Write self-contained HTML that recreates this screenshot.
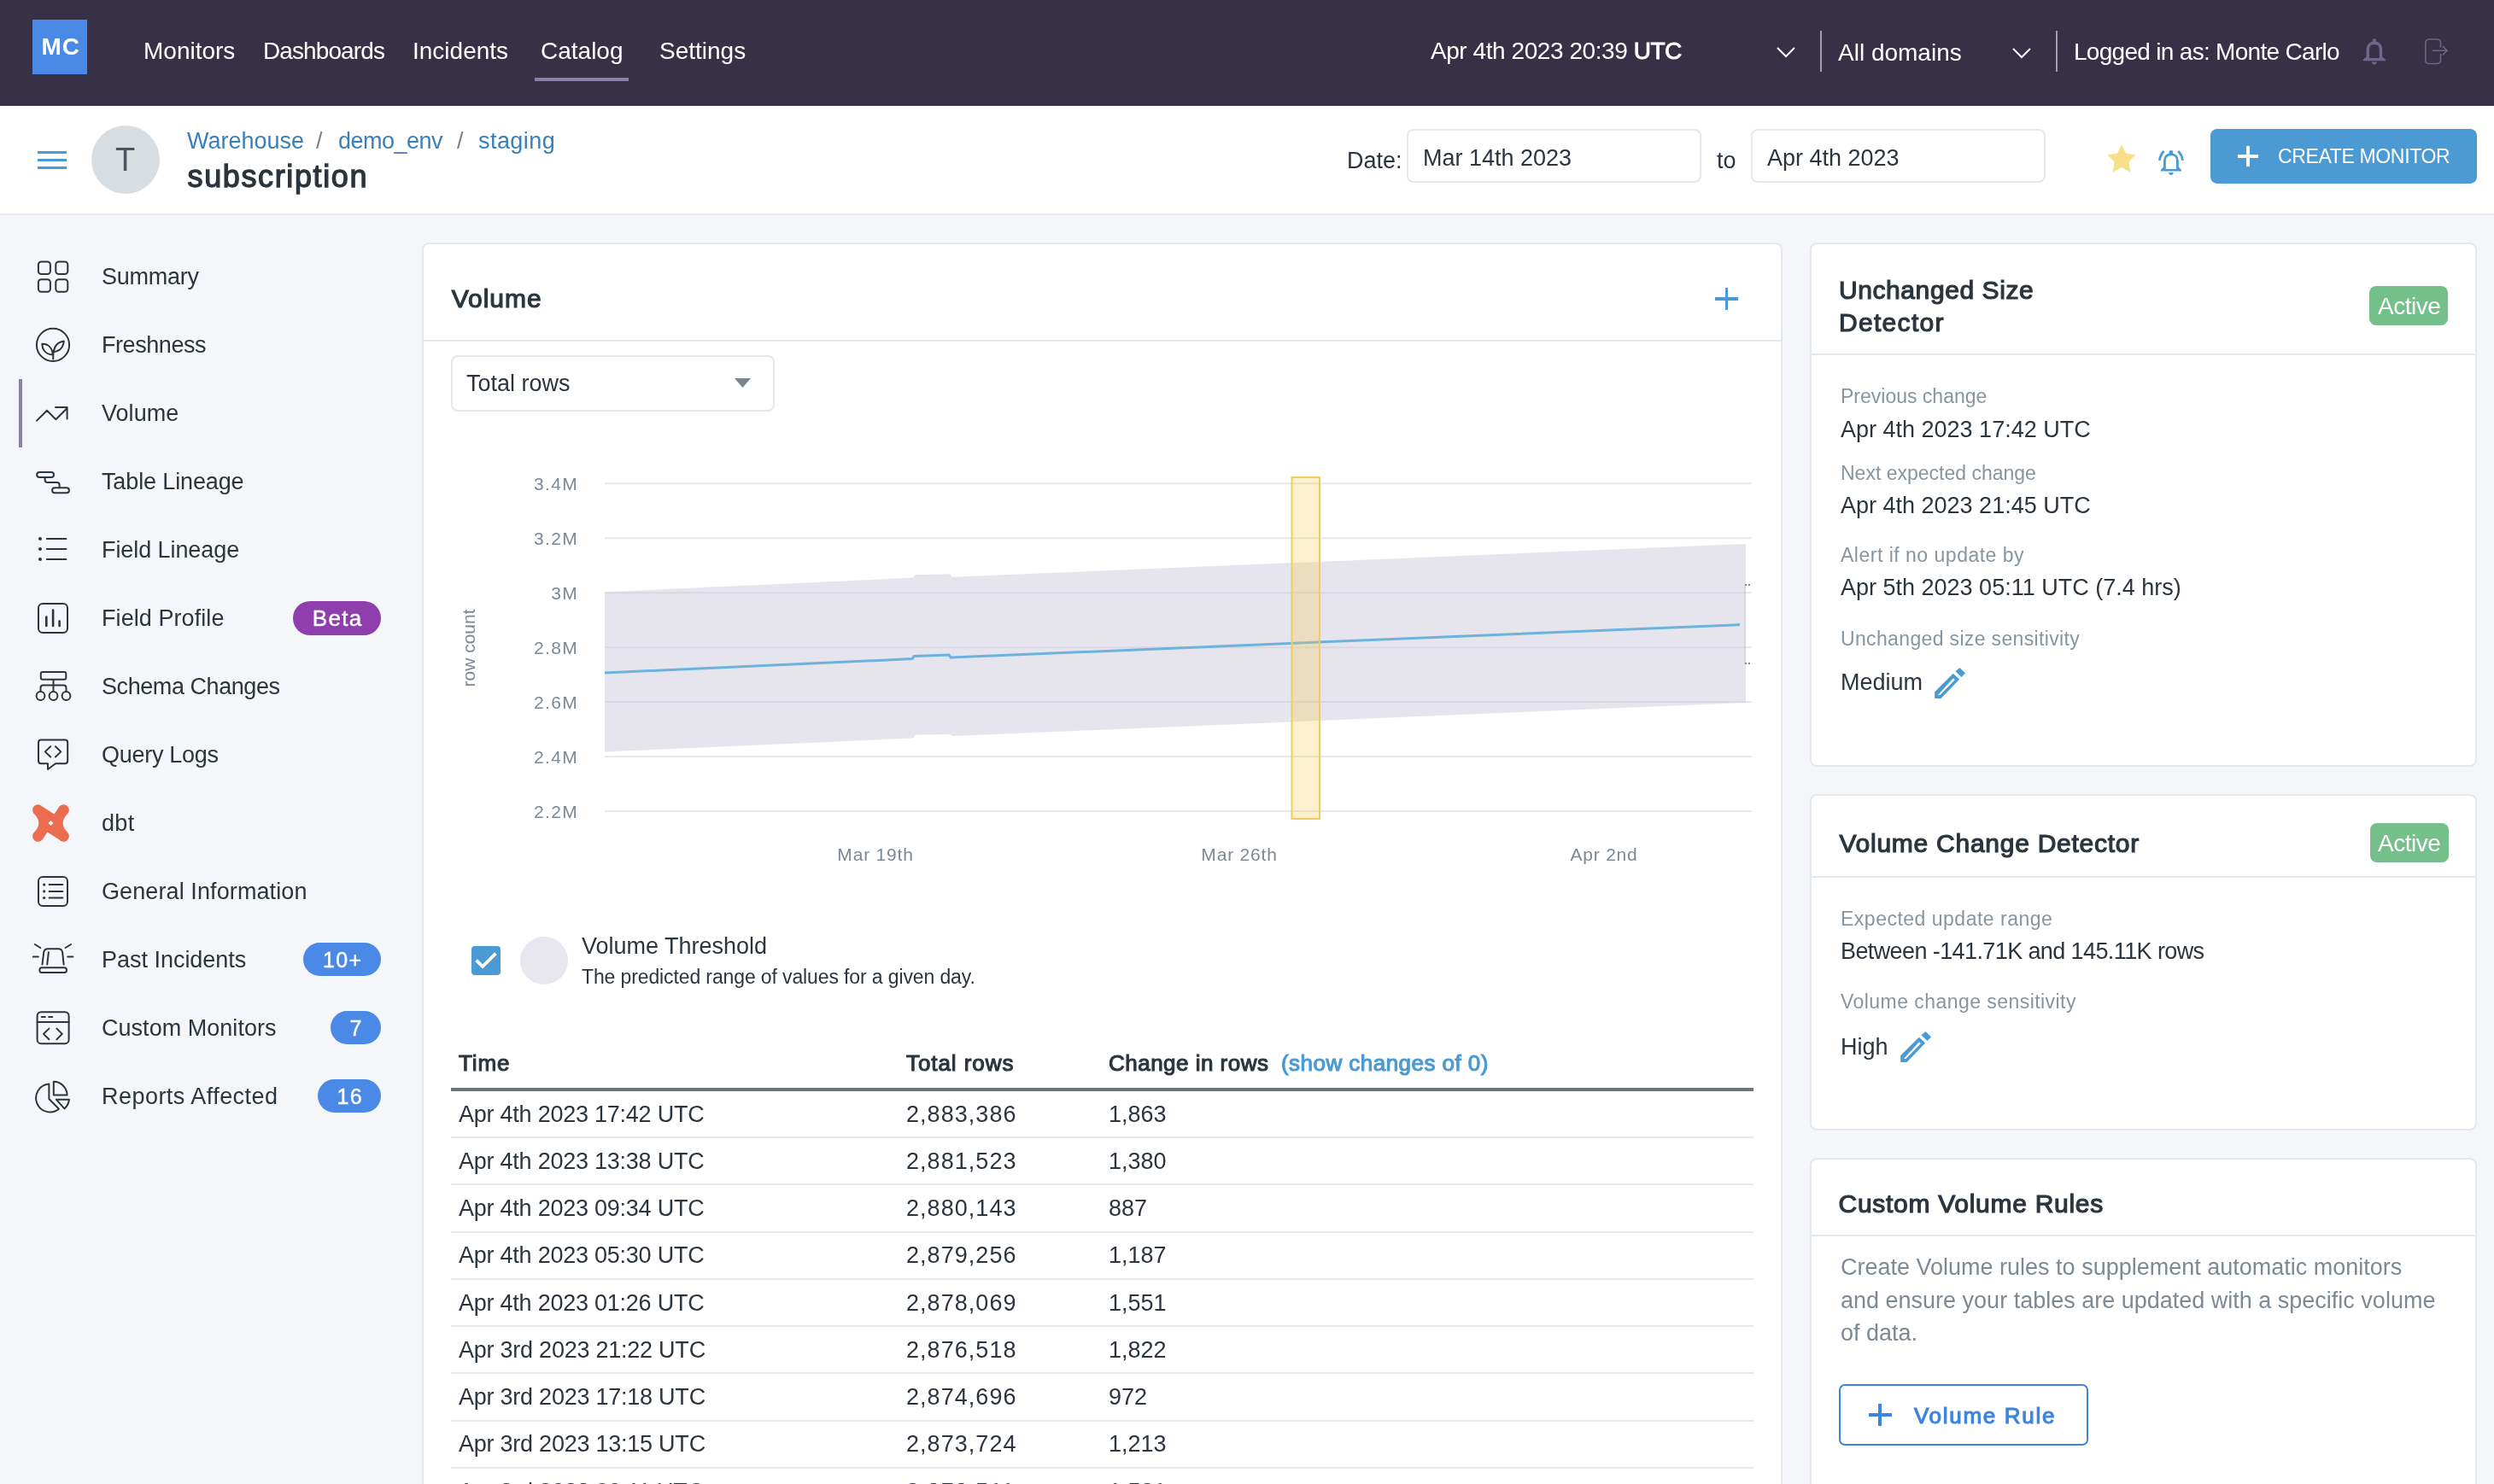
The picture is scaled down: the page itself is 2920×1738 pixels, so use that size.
<!DOCTYPE html>
<html><head><meta charset="utf-8">
<style>
*{margin:0;padding:0;box-sizing:border-box}
html,body{width:2920px;height:1738px;overflow:hidden;background:#f4f6fa;font-family:"Liberation Sans",sans-serif;color:#2c353e}
.a{position:absolute}
.t{position:absolute;white-space:nowrap;line-height:1}
svg{position:absolute;overflow:visible}
#nav{position:absolute;left:0;top:0;width:2920px;height:124px;background:#373046}
#hdr{position:absolute;left:0;top:124px;width:2920px;height:128px;background:#fff;border-bottom:2px solid #e5e9ec}
.card{position:absolute;background:#fff;border:2px solid #e4e8eb;border-radius:8px}
.nl{color:#fff;font-size:28px}
.sb{font-size:27px;color:#2c353e}
.badge{position:absolute;border-radius:20px;color:#fff;font-size:25px;text-align:center;line-height:40px;height:39px;background:#4a89e6;letter-spacing:1.3px;padding-left:1.3px;-webkit-text-stroke:0.4px #fff}
.lbl{font-size:23px;color:#8795a0}
.val{font-size:27px;color:#2c353e}
.sep{position:absolute;left:528px;width:1525px;height:2px;background:#e6eaee}
.td{font-size:27px;color:#2c353e}
#wrap{position:absolute;left:0;top:0;width:2920px;height:1738px;overflow:hidden;will-change:transform}
</style></head><body><div id="wrap">
<!-- NAV -->
<div id="nav">
  <div class="a" style="left:38px;top:23px;width:64px;height:64px;background:#4a89e6"></div>
  <div class="t" style="left:48.5px;top:40.5px;font-size:28px;font-weight:bold;color:#fff;letter-spacing:1px">MC</div>
  <div class="t nl" style="left:168px;top:46px">Monitors</div>
  <div class="t nl" style="left:308px;top:46px;letter-spacing:-0.9px">Dashboards</div>
  <div class="t nl" style="left:483px;top:46px">Incidents</div>
  <div class="t nl" style="left:633px;top:46px">Catalog</div>
  <div class="t nl" style="left:772px;top:46px">Settings</div>
  <div class="a" style="left:626px;top:91px;width:110px;height:4px;background:#8b80a8"></div>
  <div class="t nl" style="left:1675px;top:46px;letter-spacing:-0.44px">Apr 4th 2023 20:39 <span style="-webkit-text-stroke:0.9px #fff">UTC</span></div>
  <svg style="left:2080px;top:55px" width="22" height="12"><path d="M1 1 L11 11 L21 1" fill="none" stroke="#fff" stroke-width="2"/></svg>
  <div class="a" style="left:2131px;top:36px;width:2px;height:48px;background:#a29eae"></div>
  <div class="t nl" style="left:2152px;top:48px">All domains</div>
  <svg style="left:2356px;top:56px" width="22" height="12"><path d="M1 1 L11 11 L21 1" fill="none" stroke="#fff" stroke-width="2"/></svg>
  <div class="a" style="left:2407px;top:36px;width:2px;height:48px;background:#a29eae"></div>
  <div class="t nl" style="left:2428px;top:47px;letter-spacing:-0.7px">Logged in as: Monte Carlo</div>
  <svg style="left:2765px;top:44px" width="32" height="34" viewBox="0 0 32 34"><path d="M7.3 23 L7.3 14 C7.3 9 10.3 6.3 14.9 6.3 C19.5 6.3 22.5 9 22.5 14 L22.5 23" fill="none" stroke="#6f6689" stroke-width="3.4"/><path d="M5.6 22.5 L9 22.5 L9 24 L20.8 24 L20.8 22.5 L24.2 22.5 L28.2 26 L28.2 27.2 L1.6 27.2 L1.6 26 Z" fill="#6f6689"/><circle cx="14.9" cy="3.6" r="2.3" fill="#6f6689"/><path d="M11.8 28.6 L18 28.6 C17.5 30.8 16.3 31.8 14.9 31.8 C13.5 31.8 12.3 30.8 11.8 28.6 Z" fill="#6f6689"/></svg>
  <svg style="left:2836px;top:43px" width="34" height="34" viewBox="0 0 34 34"><path d="M21.5 12.5 L21.5 7 C21.5 4.3 20 3 17.5 3 L8 3 C5.5 3 3.8 4.3 3.8 7 L3.8 27.6 C3.8 30.3 5.5 31.6 8 31.6 L17.5 31.6 C20 31.6 21.5 30.3 21.5 27.6 L21.5 20 M12 16.2 L29 16.2 M23.8 11 L29 16.2 L23.8 21.5" fill="none" stroke="#6f6689" stroke-width="1.5"/></svg>
</div>
<!-- HEADER -->
<div id="hdr">
  <div class="a" style="left:44px;top:53px;width:34px;height:3px;background:#4a9ad4"></div>
  <div class="a" style="left:44px;top:62px;width:34px;height:3px;background:#4a9ad4"></div>
  <div class="a" style="left:44px;top:71px;width:34px;height:3px;background:#4a9ad4"></div>
  <div class="a" style="left:107px;top:23px;width:80px;height:80px;border-radius:50%;background:#d8dde2"></div>
  <div class="t" style="left:135px;top:44px;font-size:38px;color:#4c5660">T</div>
  <div class="t" style="left:219px;top:28px;font-size:27px;color:#3b7fb9">Warehouse</div>
  <div class="t" style="left:370px;top:28px;font-size:27px;color:#7a838c">/</div>
  <div class="t" style="left:396px;top:28px;font-size:27px;color:#3b7fb9;letter-spacing:-0.5px">demo_env</div>
  <div class="t" style="left:535px;top:28px;font-size:27px;color:#7a838c">/</div>
  <div class="t" style="left:560px;top:28px;font-size:27px;color:#3b7fb9;letter-spacing:0.45px">staging</div>
  <div class="t" style="left:219.5px;top:64.8px;font-size:36px;color:#2b343d;-webkit-text-stroke:1.3px #2b343d;letter-spacing:1.63px">subscription</div>
  <div class="t" style="left:1577px;top:51px;font-size:27px;color:#2c353e">Date:</div>
  <div class="a" style="left:1647px;top:27px;width:345px;height:63px;border:2px solid #e4e8ec;border-radius:8px"></div>
  <div class="t" style="left:1666px;top:48px;font-size:27px;color:#2c353e">Mar 14th 2023</div>
  <div class="t" style="left:2010px;top:51px;font-size:27px;color:#2c353e">to</div>
  <div class="a" style="left:2050px;top:27px;width:345px;height:63px;border:2px solid #e4e8ec;border-radius:8px"></div>
  <div class="t" style="left:2069px;top:48px;font-size:27px;color:#2c353e">Apr 4th 2023</div>
  <svg style="left:2467px;top:46px" width="34" height="32" viewBox="0 0 34 32"><path d="M17 1 L21.5 10.5 L32.5 11.8 L24.5 19.3 L26.6 30.5 L17 25 L7.4 30.5 L9.5 19.3 L1.5 11.8 L12.5 10.5 Z" fill="#f8e08a" stroke="#f8e08a" stroke-width="1.5" stroke-linejoin="round"/></svg>
  <svg style="left:2526px;top:50px" width="32" height="32" viewBox="0 0 32 32"><path d="M8.4 22 L8.4 14 C8.4 9.5 11.3 6.8 15.9 6.8 C20.5 6.8 23.4 9.5 23.4 14 L23.4 22" fill="none" stroke="#4a9ad4" stroke-width="2.8"/><path d="M7 21.6 L9.8 21.6 L9.8 23.9 L22 23.9 L22 21.6 L24.8 21.6 L28 25 L28 26.6 L3.8 26.6 L3.8 25 Z" fill="#4a9ad4"/><circle cx="15.9" cy="4.4" r="2.4" fill="#4a9ad4"/><path d="M12.9 28 L18.9 28 C18.3 30 17.2 31 15.9 31 C14.6 31 13.5 30 12.9 28 Z" fill="#4a9ad4"/><path d="M2.4 13.8 C2.8 9 4.6 6 7.6 3 M29.4 13.8 C29 9 27.2 6 24.2 3" fill="none" stroke="#4a9ad4" stroke-width="2.8"/></svg>
  <div class="a" style="left:2588px;top:27px;width:312px;height:64px;background:#4b9ad3;border-radius:8px"></div>
  <div class="a" style="left:2620px;top:57px;width:24px;height:4px;background:#fff"></div>
  <div class="a" style="left:2630px;top:47px;width:4px;height:24px;background:#fff"></div>
  <div class="t" style="left:2667px;top:48px;font-size:23px;color:#fff;letter-spacing:-0.35px">CREATE MONITOR</div>
</div>
<!-- SIDEBAR -->
<div class="a" style="left:22px;top:444px;width:4px;height:80px;background:#8b80a8"></div>
<div class="t sb" style="left:119px;top:311px;letter-spacing:-0.25px">Summary</div>
<div class="t sb" style="left:119px;top:391px;letter-spacing:-0.43px">Freshness</div>
<div class="t sb" style="left:119px;top:471px;letter-spacing:0.04px">Volume</div>
<div class="t sb" style="left:119px;top:551px;letter-spacing:-0.13px">Table Lineage</div>
<div class="t sb" style="left:119px;top:631px;letter-spacing:-0.08px">Field Lineage</div>
<div class="t sb" style="left:119px;top:711px;letter-spacing:0.07px">Field Profile</div>
<div class="t sb" style="left:119px;top:791px;letter-spacing:-0.43px">Schema Changes</div>
<div class="t sb" style="left:119px;top:871px;letter-spacing:-0.28px">Query Logs</div>
<div class="t sb" style="left:119px;top:951px;letter-spacing:0.30px">dbt</div>
<div class="t sb" style="left:119px;top:1031px;letter-spacing:0.10px">General Information</div>
<div class="t sb" style="left:119px;top:1111px;letter-spacing:-0.02px">Past Incidents</div>
<div class="t sb" style="left:119px;top:1191px;letter-spacing:0.03px">Custom Monitors</div>
<div class="t sb" style="left:119px;top:1271px;letter-spacing:0.46px">Reports Affected</div>
<div class="badge" style="left:343px;top:704px;width:103px;height:40px;line-height:40px;background:#8e3fad;font-size:26px">Beta</div>
<div class="badge" style="left:355px;top:1104px;width:91px">10+</div>
<div class="badge" style="left:387px;top:1184px;width:59px">7</div>
<div class="badge" style="left:372px;top:1264px;width:74px">16</div>
<svg style="left:0;top:0" width="100" height="1400" viewBox="0 0 100 1400">
 <g fill="none" stroke="#2c353e" stroke-width="2" stroke-linecap="round" stroke-linejoin="round">
  <!-- summary -->
  <rect x="44.9" y="306.5" width="14" height="14.5" rx="3.5"/>
  <rect x="65.3" y="306.5" width="14" height="14.5" rx="3.5"/>
  <rect x="44.9" y="327.2" width="14" height="14.5" rx="3.5"/>
  <rect x="65.3" y="327.2" width="14" height="14.5" rx="3.5"/>
  <!-- freshness -->
  <circle cx="62" cy="403.9" r="19.1"/>
  <path d="M62.2 420.5 C62 414 62.5 408 66 404 C68.5 401 72 400 74.8 399.5 C74.5 403 73 407 70 409.5 C67.5 411.5 64.5 412.2 62.3 412.3"/>
  <path d="M61.8 415.5 C61.5 410 59 406 55.5 404 C53.5 403 51 402.7 49.3 402.7 C49.3 405.5 50 408.5 52 411 C54.5 414 58 415.3 61.8 415.5"/>
  <!-- volume -->
  <path d="M43 492.6 L55 480.8 L65.4 491.2 L78.6 478 M65 477 L78.6 477 L78.6 490.5" stroke-width="2"/>
  <!-- table lineage -->
  <rect x="43.2" y="552.9" width="19.8" height="6" rx="3"/>
  <rect x="61.1" y="571.2" width="19.8" height="6" rx="3"/>
  <path d="M52.6 559.6 L52.6 562 C52.6 564 53.6 565 55.6 565 L66.6 565 C68.6 565 69.6 566 69.6 568 L69.6 571"/>
  <!-- field lineage -->
  <path d="M54.8 630.9 L77.4 630.9 M54.8 643 L77.4 643 M54.8 655 L77.4 655" stroke-width="2"/>
  <!-- field profile -->
  <rect x="45" y="707" width="34" height="34" rx="5"/>
  <path d="M54.3 722.5 L54.3 733 M62.1 714.5 L62.1 733 M69.6 727.5 L69.6 733" stroke-width="2.6"/>
  <!-- schema -->
  <rect x="47.8" y="787" width="29.5" height="8.8" rx="2"/>
  <path d="M62.5 796 L62.5 809.5 M47.5 810 L47.5 805.5 C47.5 803.5 48.5 802.5 50.5 802.5 L74.5 802.5 C76.5 802.5 77.5 803.5 77.5 805.5 L77.5 810"/>
  <circle cx="47.5" cy="815" r="4.9"/><circle cx="62.5" cy="815" r="4.9"/><circle cx="77.5" cy="815" r="4.9"/>
  <!-- query logs -->
  <path d="M48 866.6 L76 866.6 C78 866.6 79.2 867.8 79.2 869.8 L79.2 891 C79.2 893 78 894.2 76 894.2 L65 894.2 L56 901 L56 894.2 L48 894.2 C46 894.2 45 893 45 891 L45 869.8 C45 867.8 46 866.6 48 866.6 Z"/>
  <path d="M59.2 874.2 L52.8 880.4 L59.2 886.5 M64.9 874.2 L71.3 880.4 L64.9 886.5"/>
  <!-- general information -->
  <rect x="45" y="1027" width="34" height="34" rx="5"/>
  <path d="M57.6 1036.1 L73.4 1036.1 M57.6 1043.9 L73.4 1043.9 M57.6 1051.5 L73.4 1051.5"/>
  <!-- past incidents -->
  <rect x="46.4" y="1133.2" width="31.5" height="5.8" rx="2.5"/>
  <path d="M49.5 1129.5 L51.2 1115.5 C51.6 1112.8 53.3 1111.2 56 1111.2 L68.5 1111.2 C71.2 1111.2 72.8 1112.8 73.2 1115.5 L74.6 1129.5 M56.9 1115.2 L55.2 1129.5"/>
  <path d="M40.8 1106 L47.3 1110 M38.8 1120.4 L44.8 1120.4 M76.6 1110 L83.1 1106 M79.2 1120.4 L85.4 1120.4"/>
  <!-- custom monitors -->
  <rect x="43.6" y="1185.2" width="37" height="37" rx="4.5"/>
  <path d="M43.6 1197.1 L80.6 1197.1"/>
  <path d="M48.8 1191 L52.8 1191 M57.2 1191 L61.2 1191" stroke-width="2.2"/>
  <path d="M57.4 1204.6 L51 1210.9 L57.4 1217.2 M66.4 1204.6 L72.8 1210.9 L66.4 1217.2"/>
  <!-- reports affected -->
  <path d="M57.4 1269.5 A16.5 16.5 0 1 0 69 1298.8 L57.4 1287 Z"/>
  <path d="M62.8 1266.8 L62.8 1282.6 L78.6 1282.6 A16 16 0 0 0 62.8 1266.8 Z"/>
  <path d="M65.8 1287.7 L81 1287.7 A16.5 16.5 0 0 1 75.4 1298.4 Z"/>
 </g>
 <g fill="#2c353e">
  <circle cx="47" cy="630.9" r="2"/><circle cx="47" cy="643" r="2"/><circle cx="47" cy="655" r="2"/>
  <circle cx="51.7" cy="1036.1" r="1.6"/><circle cx="51.7" cy="1043.9" r="1.6"/><circle cx="51.7" cy="1051.5" r="1.6"/>
 </g>
 <!-- dbt -->
 <g transform="translate(59.5,964)">
  <path d="M-10 -19.5 L4 -10.5 L10 -19.5 A6.2 6.2 0 0 1 19.8 -11 Q8.5 0 19.8 11 A6.2 6.2 0 0 1 10 19.5 L-4 10.5 L-10 19.5 A6.2 6.2 0 0 1 -19.8 11 Q-8.5 0 -19.8 -11 A6.2 6.2 0 0 1 -10 -19.5 Z" fill="#eb6c4f"/>
  <path d="M0 -3.1 L3.1 0 L0 3.1 L-3.1 0 Z" fill="#f4f6fa"/>
 </g>
</svg>
<!-- VOLUME CARD -->
<div class="card" style="left:494px;top:284px;width:1593px;height:1500px"></div>
<div class="a" style="left:496px;top:398px;width:1589px;height:2px;background:#e4e8eb"></div>
<div class="t" style="left:528.8px;top:334.5px;font-size:30px;color:#2c353e;-webkit-text-stroke:1.2px #2c353e;letter-spacing:0.95px">Volume</div>
<div class="a" style="left:2008px;top:348.2px;width:26.5px;height:3.4px;background:#4a9ad4"></div>
<div class="a" style="left:2019.5px;top:337px;width:3.4px;height:25.6px;background:#4a9ad4"></div>
<div class="a" style="left:528px;top:416px;width:379px;height:66px;border:2px solid #e4e8ec;border-radius:8px;background:#fff"></div>
<div class="t" style="left:546px;top:436px;font-size:27px;color:#2c353e">Total rows</div>
<svg style="left:860px;top:443px" width="19" height="11"><path d="M0 0 L19 0 L9.5 11 Z" fill="#7a858f"/></svg>
<!-- chart -->
<svg style="left:0;top:0" width="2100" height="1100" viewBox="0 0 2100 1100">
 <g stroke="#e6e8ec" stroke-width="2">
  <path d="M708 566.3 L2051 566.3 M708 630.3 L2051 630.3 M708 694.2 L2051 694.2 M708 758.2 L2051 758.2 M708 822.1 L2051 822.1 M708 886 L2051 886 M708 950 L2051 950"/>
 </g>
 <path d="M708 693.4 L1069 676.6 L1072 673.2 L1112 672.3 L1115 675.8 L2044 637 L2044 823 L1115 862 L1112 860 L1072 860.5 L1069 864.5 L708 880.5 Z" fill="rgba(200,195,215,0.45)"/>
 <path d="M708 788 L1068 771.6 L1070 768.5 L1111 767 L1113 770 L2037 731.6" fill="none" stroke="#6cb2dd" stroke-width="3"/>
 <rect x="1512.5" y="559" width="32.5" height="400" fill="rgba(245,205,90,0.3)" stroke="#f2cd5e" stroke-width="2"/>
 <path d="M2043 685 L2043 777" stroke="#c9c6d3" stroke-width="1"/>
 <path d="M2043 685 L2051 685 M2043 777 L2051 777" stroke="#8a80a8" stroke-width="2" stroke-dasharray="2 2"/>
 <g font-family="Liberation Sans" font-size="21" fill="#7c8893" text-anchor="end" letter-spacing="1.3">
  <text x="677" y="574">3.4M</text>
  <text x="677" y="638">3.2M</text>
  <text x="677" y="702">3M</text>
  <text x="677" y="766">2.8M</text>
  <text x="677" y="830">2.6M</text>
  <text x="677" y="894">2.4M</text>
  <text x="677" y="958">2.2M</text>
 </g>
 <g font-family="Liberation Sans" font-size="21" fill="#7c8893" text-anchor="middle" letter-spacing="0.8">
  <text x="1025" y="1008">Mar 19th</text>
  <text x="1451" y="1008">Mar 26th</text>
  <text x="1878" y="1008">Apr 2nd</text>
  <text transform="translate(556,759) rotate(-90)" x="0" y="0" letter-spacing="0">row count</text>
 </g>
</svg>
<!-- legend -->
<div class="a" style="left:551.5px;top:1108.2px;width:34px;height:34px;border-radius:4px;background:#4a9ad4"></div>
<svg style="left:551.5px;top:1108.2px" width="34" height="34"><path d="M5.6 16.6 L13.1 23.9 L28.5 8.6" fill="none" stroke="#fff" stroke-width="3.8"/></svg>
<div class="a" style="left:609px;top:1097px;width:56px;height:56px;border-radius:50%;background:#e8e6ee"></div>
<div class="t" style="left:681px;top:1095px;font-size:27px;color:#2c353e">Volume Threshold</div>
<div class="t" style="left:681px;top:1133px;font-size:23px;color:#2c353e;letter-spacing:-0.12px">The predicted range of values for a given day.</div>
<!-- table -->
<div class="t" style="left:537px;top:1232px;font-size:26px;color:#2c353e;-webkit-text-stroke:1.1px #2c353e;letter-spacing:0.87px">Time</div>
<div class="t" style="left:1061px;top:1232px;font-size:26px;color:#2c353e;-webkit-text-stroke:1.1px #2c353e;letter-spacing:0.93px">Total rows</div>
<div class="t" style="left:1298px;top:1232px;font-size:26px;color:#2c353e;-webkit-text-stroke:1.1px #2c353e;letter-spacing:0.48px">Change in rows</div>
<div class="t" style="left:1500px;top:1232px;font-size:26px;color:#4a9ad4;-webkit-text-stroke:1.1px #4a9ad4;letter-spacing:0.46px">(show changes of 0)</div>
<div class="a" style="left:528px;top:1274px;width:1525px;height:4px;background:#6b7680"></div>
<div class="t td" style="left:537px;top:1291.5px;letter-spacing:-0.24px">Apr 4th 2023 17:42 UTC</div>
<div class="t td" style="left:1061px;top:1291.5px;letter-spacing:1.05px">2,883,386</div>
<div class="t td" style="left:1298px;top:1291.5px">1,863</div>
<div class="sep" style="top:1331.0px"></div>
<div class="t td" style="left:537px;top:1346.8px;letter-spacing:-0.24px">Apr 4th 2023 13:38 UTC</div>
<div class="t td" style="left:1061px;top:1346.8px;letter-spacing:1.05px">2,881,523</div>
<div class="t td" style="left:1298px;top:1346.8px">1,380</div>
<div class="sep" style="top:1386.2px"></div>
<div class="t td" style="left:537px;top:1402.0px;letter-spacing:-0.24px">Apr 4th 2023 09:34 UTC</div>
<div class="t td" style="left:1061px;top:1402.0px;letter-spacing:1.05px">2,880,143</div>
<div class="t td" style="left:1298px;top:1402.0px">887</div>
<div class="sep" style="top:1441.5px"></div>
<div class="t td" style="left:537px;top:1457.3px;letter-spacing:-0.24px">Apr 4th 2023 05:30 UTC</div>
<div class="t td" style="left:1061px;top:1457.3px;letter-spacing:1.05px">2,879,256</div>
<div class="t td" style="left:1298px;top:1457.3px">1,187</div>
<div class="sep" style="top:1496.8px"></div>
<div class="t td" style="left:537px;top:1512.5px;letter-spacing:-0.24px">Apr 4th 2023 01:26 UTC</div>
<div class="t td" style="left:1061px;top:1512.5px;letter-spacing:1.05px">2,878,069</div>
<div class="t td" style="left:1298px;top:1512.5px">1,551</div>
<div class="sep" style="top:1552.0px"></div>
<div class="t td" style="left:537px;top:1567.8px;letter-spacing:-0.24px">Apr 3rd 2023 21:22 UTC</div>
<div class="t td" style="left:1061px;top:1567.8px;letter-spacing:1.05px">2,876,518</div>
<div class="t td" style="left:1298px;top:1567.8px">1,822</div>
<div class="sep" style="top:1607.2px"></div>
<div class="t td" style="left:537px;top:1623.0px;letter-spacing:-0.24px">Apr 3rd 2023 17:18 UTC</div>
<div class="t td" style="left:1061px;top:1623.0px;letter-spacing:1.05px">2,874,696</div>
<div class="t td" style="left:1298px;top:1623.0px">972</div>
<div class="sep" style="top:1662.5px"></div>
<div class="t td" style="left:537px;top:1678.3px;letter-spacing:-0.24px">Apr 3rd 2023 13:15 UTC</div>
<div class="t td" style="left:1061px;top:1678.3px;letter-spacing:1.05px">2,873,724</div>
<div class="t td" style="left:1298px;top:1678.3px">1,213</div>
<div class="sep" style="top:1717.8px"></div>
<div class="t td" style="left:537px;top:1733.5px;letter-spacing:-0.24px">Apr 3rd 2023 09:11 UTC</div>
<div class="t td" style="left:1061px;top:1733.5px;letter-spacing:1.05px">2,872,511</div>
<div class="t td" style="left:1298px;top:1733.5px">1,521</div>
<div class="sep" style="top:1773.0px"></div>
<!-- RIGHT CARDS -->
<div class="card" style="left:2119px;top:284px;width:781px;height:614px"></div>
<div class="a" style="left:2121px;top:414px;width:777px;height:2px;background:#e4e8eb"></div>
<div class="t" style="left:2153px;top:325px;font-size:30px;color:#2c353e;-webkit-text-stroke:1.2px #2c353e;letter-spacing:0.58px">Unchanged Size</div>
<div class="t" style="left:2153px;top:363.2px;font-size:30px;color:#2c353e;-webkit-text-stroke:1.2px #2c353e;letter-spacing:1.31px">Detector</div>
<div class="a" style="left:2774px;top:335px;width:92px;height:46px;border-radius:8px;background:#74bf8a"></div>
<div class="t" style="left:2784px;top:345px;font-size:28px;color:#fff;letter-spacing:-0.5px">Active</div>
<div class="t lbl" style="left:2155px;top:453px">Previous change</div>
<div class="t val" style="left:2155px;top:490px">Apr 4th 2023 17:42 UTC</div>
<div class="t lbl" style="left:2155px;top:543px">Next expected change</div>
<div class="t val" style="left:2155px;top:579px">Apr 4th 2023 21:45 UTC</div>
<div class="t lbl" style="left:2155px;top:639px;letter-spacing:0.5px">Alert if no update by</div>
<div class="t val" style="left:2155px;top:675px">Apr 5th 2023 05:11 UTC (7.4 hrs)</div>
<div class="t lbl" style="left:2155px;top:737px;letter-spacing:0.35px">Unchanged size sensitivity</div>
<div class="t val" style="left:2155px;top:786px">Medium</div>
<svg style="left:2263px;top:779px" width="40" height="40" viewBox="0 0 40 40"><path d="M2.2 38.9 L2.2 31.2 L23.8 9.8 L31.1 16.5 L9.6 38.9 Z M6 34.9 L8.4 34.9 L25.8 17.3 L24 15.3 Z" fill="#4a9ad4" fill-rule="evenodd"/><path d="M26.4 7.2 L31.5 2.9 L38 9.4 L33.5 14 Z" fill="#4a9ad4"/></svg>

<div class="card" style="left:2119px;top:930px;width:781px;height:394px"></div>
<div class="a" style="left:2121px;top:1026px;width:777px;height:2px;background:#e4e8eb"></div>
<div class="t" style="left:2153.5px;top:973px;font-size:30px;color:#2c353e;-webkit-text-stroke:1.2px #2c353e;letter-spacing:0.74px">Volume Change Detector</div>
<div class="a" style="left:2775px;top:964px;width:92px;height:46px;border-radius:8px;background:#74bf8a"></div>
<div class="t" style="left:2784px;top:974px;font-size:28px;color:#fff;letter-spacing:-0.5px">Active</div>
<div class="t lbl" style="left:2155px;top:1065px;letter-spacing:0.5px">Expected update range</div>
<div class="t val" style="left:2155px;top:1101px;letter-spacing:-0.6px">Between -141.71K and 145.11K rows</div>
<div class="t lbl" style="left:2155px;top:1162px;letter-spacing:0.45px">Volume change sensitivity</div>
<div class="t val" style="left:2155px;top:1213px">High</div>
<svg style="left:2223px;top:1205px" width="40" height="40" viewBox="0 0 40 40"><path d="M2.2 38.9 L2.2 31.2 L23.8 9.8 L31.1 16.5 L9.6 38.9 Z M6 34.9 L8.4 34.9 L25.8 17.3 L24 15.3 Z" fill="#4a9ad4" fill-rule="evenodd"/><path d="M26.4 7.2 L31.5 2.9 L38 9.4 L33.5 14 Z" fill="#4a9ad4"/></svg>

<div class="card" style="left:2119px;top:1356px;width:781px;height:500px"></div>
<div class="a" style="left:2121px;top:1446px;width:777px;height:2px;background:#e4e8eb"></div>
<div class="t" style="left:2152.5px;top:1395px;font-size:30px;color:#2c353e;-webkit-text-stroke:1.2px #2c353e;letter-spacing:0.72px">Custom Volume Rules</div>
<div class="a" style="left:2155px;top:1465px;width:700px;font-size:27px;line-height:38.7px;color:#7d8994">Create Volume rules to supplement automatic monitors and ensure your tables are updated with a specific volume of data.</div>
<div class="a" style="left:2153px;top:1621px;width:292px;height:72px;border:2px solid #3d84e0;border-radius:7px"></div>
<div class="a" style="left:2188px;top:1654.8px;width:26.7px;height:4px;background:#3d84e0"></div>
<div class="a" style="left:2199.4px;top:1644px;width:4px;height:25.7px;background:#3d84e0"></div>
<div class="t" style="left:2241px;top:1645px;font-size:26px;color:#3d84e0;-webkit-text-stroke:1.1px #3d84e0;letter-spacing:1.7px">Volume Rule</div>
</div></body></html>
